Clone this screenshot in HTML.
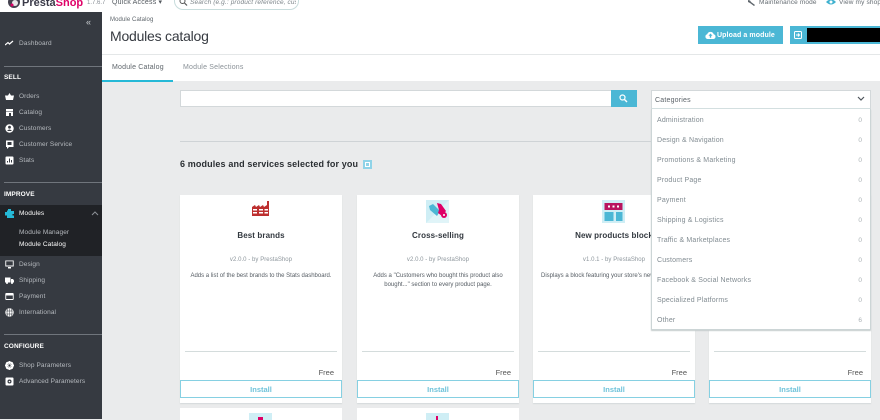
<!DOCTYPE html>
<html><head><meta charset="utf-8"><style>
*{box-sizing:border-box}
html,body{margin:0;padding:0;width:880px;height:419px;overflow:hidden;background:#eaebec;font-family:"Liberation Sans",sans-serif}
.a{position:absolute;white-space:nowrap}
#side{position:absolute;left:0;top:12px;width:102px;height:407px;background:#363a41}
.n{position:absolute;left:19px;margin-top:1px;font-size:6.5px;line-height:10px;color:#b5b9be;letter-spacing:.1px;white-space:nowrap}
.h{position:absolute;left:4px;margin-top:1px;font-size:6.5px;line-height:10px;font-weight:bold;color:#fff;letter-spacing:.1px}
.sep{position:absolute;left:4px;width:98px;height:1px;background:#70757c}
.ic{position:absolute;left:5px;margin-top:1px;width:9px;height:9px}
.card{position:absolute;width:162px;background:#fff;box-shadow:0 1px 1px #d5d8da;top:195px;height:208px;text-align:center}
.card .t{position:absolute;left:0;right:0;top:35px;font-size:8px;line-height:12px;font-weight:bold;color:#32383f;letter-spacing:.1px;white-space:nowrap}
.card .v{position:absolute;left:0;right:0;top:60px;font-size:6px;line-height:10px;color:#8d969c;letter-spacing:.05px}
.card .d{position:absolute;left:10px;right:10px;top:77px;font-size:6px;line-height:8.5px;color:#555c63;white-space:normal}
.card .l{position:absolute;left:5px;right:5px;top:156px;height:1px;background:#d4dcdc}
.card .f{position:absolute;right:8px;top:173px;font-size:7.5px;line-height:10px;color:#555}
.card .b{position:absolute;left:0;right:0;top:185px;height:18px;border:1px solid #86d0e2;font-size:7.5px;line-height:17px;font-weight:bold;color:#6fc3da}
.r2{position:absolute;top:408px;height:12px;width:162px;background:#fff}
.cat{position:absolute;left:5px;margin-top:2px;font-size:7px;line-height:10px;color:#828c92;letter-spacing:.18px;white-space:nowrap}
.z{position:absolute;right:8px;margin-top:2px;font-size:6.5px;line-height:10px;color:#a9b0b4}
</style></head><body>

<!-- top bar -->
<div style="position:absolute;left:0;top:0;width:880px;height:12px;background:#fff"></div>
<svg class="a" style="left:7px;top:0" width="14" height="10"><circle cx="7" cy="2" r="6" fill="#44424f"/><circle cx="8" cy="3" r="3" fill="#e8e6e8"/><circle cx="5" cy="5" r="1.5" fill="#df0067"/></svg>
<div class="a" style="left:22px;top:-3px;font-size:11px;line-height:12px;font-weight:bold;color:#3a3a48">Presta<span style="color:#df0067">Shop</span></div>
<div class="a" style="left:87px;top:-1px;font-size:6px;line-height:9px;color:#8a9097">1.7.6.7</div>
<div class="a" style="left:112px;top:-2px;font-size:7px;line-height:10px;color:#53595f;letter-spacing:.2px">Quick Access ▾</div>
<div style="position:absolute;left:174px;top:-12px;width:125px;height:22px;border:1px solid #c8dcdc;border-radius:9px;background:#fff"></div>
<svg class="a" style="left:179px;top:-2px" width="9" height="9" viewBox="0 0 9 9"><circle cx="3.500" cy="3" r="2.500" fill="none" stroke="#555" stroke-width="1"/><path d="M5.500 5l2.500 2.500" stroke="#555" stroke-width="1.200"/></svg>
<div class="a" style="left:190px;top:-2px;width:106px;overflow:hidden;font-size:6.5px;line-height:10px;font-style:italic;color:#7c8489;letter-spacing:.12px">Search (e.g.: product reference, customer</div>
<svg class="a" style="left:748px;top:0" width="8" height="6" viewBox="0 0 8 6"><path d="M0 0l2 .5 1 1.500 4 3-1 1-4-3-2-1z" fill="#5f666c"/></svg>
<div class="a" style="left:759px;top:-2px;font-size:6.5px;line-height:10px;color:#656c72;letter-spacing:.15px">Maintenance mode</div>
<svg class="a" style="left:826px;top:-1px" width="10" height="8" viewBox="0 0 10 8"><path d="M0 3q5-5 10 0q-5 5-10 0z" fill="#3fb1cf"/><circle cx="5" cy="3" r="1.500" fill="#fff"/></svg>
<div class="a" style="left:839px;top:-2px;font-size:6.5px;line-height:10px;color:#656c72;letter-spacing:.15px">View my shop</div>

<!-- header -->
<div style="position:absolute;left:102px;top:12px;width:778px;height:43px;background:#fff;border-bottom:1px solid #e4e7e8"></div>
<div class="a" style="left:110px;top:15px;font-size:6px;line-height:10px;color:#5d646a;letter-spacing:.1px">Module Catalog</div>
<div class="a" style="left:110px;top:27px;font-size:14px;line-height:18px;color:#363a41;letter-spacing:-.22px">Modules catalog</div>
<div style="position:absolute;left:698px;top:26px;width:85px;height:18px;background:#4bb7d5"></div>
<svg class="a" style="left:705px;top:31px" width="11" height="8" viewBox="0 0 11 8"><path d="M2.500 8a2.400 2.400 0 0 1-.3-4.700 3.400 3.400 0 0 1 6.500 0 2.400 2.400 0 0 1-.2 4.700z" fill="#fff"/><path d="M5.500 2.500l-2 2.200h1.300v2h1.400v-2h1.300z" fill="#4bb7d5"/></svg>
<div class="a" style="left:717px;top:31px;font-size:7px;line-height:10px;font-weight:bold;color:#fff;letter-spacing:.1px">Upload a module</div>
<div style="position:absolute;left:790px;top:26px;width:90px;height:18px;background:#4bb7d5"></div>
<svg class="a" style="left:794px;top:31px" width="9" height="9" viewBox="0 0 9 9"><rect x=".5" y=".5" width="7" height="7" rx="1" fill="none" stroke="#fff"/><path d="M2 4h3M4 2.500l1.500 1.500-1.500 1.500" stroke="#fff" fill="none"/></svg>
<div style="position:absolute;left:807px;top:28px;width:73px;height:14px;background:#000"></div>

<!-- tabs -->
<div style="position:absolute;left:102px;top:55px;width:778px;height:26px;background:#fff"></div>
<div style="position:absolute;left:102px;top:79.500px;width:71px;height:2px;background:#25b9d7"></div>
<div class="a" style="left:112px;top:63px;font-size:7px;line-height:10px;color:#5f666c;letter-spacing:.2px">Module Catalog</div>
<div class="a" style="left:183px;top:63px;font-size:7px;line-height:10px;color:#8a9197;letter-spacing:.2px">Module Selections</div>

<!-- sidebar -->
<div id="side"></div>
<div class="a" style="left:86px;top:17px;font-size:9px;line-height:10px;color:#c8ccd0">«</div>
<svg class="ic" style="top:38px" viewBox="0 0 9 9"><path d="M0 6l3-2.500 1.500 1.500L8 2" fill="none" stroke="#fff" stroke-width="1.200"/></svg>
<div class="n" style="top:38px">Dashboard</div>
<div class="sep" style="top:66px"></div>
<div class="h" style="top:72px">SELL</div>
<svg class="ic" style="top:91px" viewBox="0 0 9 9"><path d="M0 3.500h9l-1 4.500H1zM3 3.500L4.500 1 6 3.500" fill="#fff"/></svg>
<div class="n" style="top:91px">Orders</div>
<svg class="ic" style="top:107px" viewBox="0 0 9 9"><path d="M1 1h7v2H1z M1 3.500h7V8H6V5H4v3H1z" fill="#fff"/></svg>
<div class="n" style="top:107px">Catalog</div>
<svg class="ic" style="top:123px" viewBox="0 0 9 9"><circle cx="4.500" cy="4.500" r="4.200" fill="#fff"/><circle cx="4.500" cy="3.200" r="1.400" fill="#363a41"/><path d="M2 7q2.500-3 5 0" fill="#363a41"/></svg>
<div class="n" style="top:123px">Customers</div>
<svg class="ic" style="top:139px" viewBox="0 0 9 9"><path d="M1 .5h7.500v6.500H4L2 9V7H1z" fill="#fff"/><rect x="2.500" y="2" width="4" height="3" fill="#363a41"/></svg>
<div class="n" style="top:139px">Customer Service</div>
<svg class="ic" style="top:155px" viewBox="0 0 9 9"><rect x=".5" y=".5" width="8" height="8" rx="1" fill="#fff"/><path d="M2.500 6.500V5M4.500 6.500V2.500M6.500 6.500V4" stroke="#363a41"/></svg>
<div class="n" style="top:155px">Stats</div>
<div class="sep" style="top:182px"></div>
<div class="h" style="top:189px">IMPROVE</div>
<div style="position:absolute;left:0;top:205px;width:102px;height:51px;background:#202226"></div>
<svg class="ic" style="top:208px" viewBox="0 0 9 9"><path d="M3 0h3v2h3v3H7.500v1.500H9V9H2V6.500H0V3h2V1.500H3z" fill="#25b9d7"/></svg>
<div class="n" style="top:208px;color:#fff">Modules</div>
<svg class="a" style="left:91px;top:211px" width="8" height="5" viewBox="0 0 8 5"><path d="M1 4l3-3 3 3" fill="none" stroke="#8c9196"/></svg>
<div class="n" style="top:227px">Module Manager</div>
<div class="n" style="top:239px;color:#fff">Module Catalog</div>
<svg class="ic" style="top:259px" viewBox="0 0 9 9"><rect x=".300" y=".500" width="8.400" height="6" fill="#fff"/><rect x="1.200" y="1.300" width="6.600" height="4.200" fill="#363a41"/><rect x="3" y="7" width="3" height="1.500" fill="#fff"/></svg>
<div class="n" style="top:259px">Design</div>
<svg class="ic" style="top:275px" viewBox="0 0 9 9"><path d="M0 1.500h5.500V6.500H0zM6 3h2l1 1.500v2H6z" fill="#fff"/><circle cx="2" cy="7" r="1" fill="#fff"/><circle cx="7" cy="7" r="1" fill="#fff"/></svg>
<div class="n" style="top:275px">Shipping</div>
<svg class="ic" style="top:291px" viewBox="0 0 9 9"><rect x=".300" y="1" width="8.400" height="7" rx="1" fill="#fff"/><rect x="1.200" y="3.500" width="6.600" height="3.500" fill="#363a41"/></svg>
<div class="n" style="top:291px">Payment</div>
<svg class="ic" style="top:307px" viewBox="0 0 9 9"><circle cx="4.500" cy="4.500" r="4.200" fill="#fff"/><path d="M1 3h7M1 6h7M4.500 .500v8M2.500 1q-1 3.500 0 7M6.500 1q1 3.500 0 7" stroke="#363a41" stroke-width=".5" fill="none"/></svg>
<div class="n" style="top:307px">International</div>
<div class="sep" style="top:334px"></div>
<div class="h" style="top:341px">CONFIGURE</div>
<svg class="ic" style="top:360px" viewBox="0 0 9 9"><circle cx="4.500" cy="4.500" r="3.200" fill="none" stroke="#fff" stroke-width="2.200"/><path d="M4.500 0v9M0 4.500h9M1.300 1.300l6.400 6.400M7.700 1.300L1.300 7.700" stroke="#fff" stroke-width=".9"/><circle cx="4.500" cy="4.500" r="1.100" fill="#363a41"/></svg>
<div class="n" style="top:360px">Shop Parameters</div>
<svg class="ic" style="top:376px" viewBox="0 0 9 9"><rect x=".500" y=".500" width="8" height="8" rx="1" fill="#fff"/><circle cx="4.500" cy="4.500" r="2" fill="#363a41"/><circle cx="4.500" cy="4.500" r=".8" fill="#fff"/></svg>
<div class="n" style="top:376px">Advanced Parameters</div>

<!-- search -->
<div style="position:absolute;left:180px;top:90px;width:432px;height:17px;background:#fff;border:1px solid #d3d8da"></div>
<div style="position:absolute;left:611px;top:90px;width:26px;height:17px;background:#4bb7d5"></div>
<svg class="a" style="left:619px;top:94px" width="9" height="9" viewBox="0 0 9 9"><circle cx="3.500" cy="3.500" r="2.500" fill="none" stroke="#fff" stroke-width="1.200"/><path d="M5.500 5.500L8 8" stroke="#fff" stroke-width="1.400"/></svg>
<div style="position:absolute;left:180px;top:141px;width:472px;height:1px;background:#cfd3d6"></div>
<div class="a" style="left:180px;top:158px;font-size:9px;line-height:13px;font-weight:bold;color:#2b2f33;letter-spacing:.13px">6 modules and services selected for you</div>
<svg class="a" style="left:363px;top:160px" width="9" height="9" viewBox="0 0 9 9"><rect width="9" height="9" fill="#8fd3e8"/><rect x="2.500" y="2.500" width="4" height="4" fill="none" stroke="#fff"/></svg>

<!-- cards -->
<div class="card" style="left:180px">
  <svg class="a" style="left:72px;top:6px" width="18" height="16" viewBox="0 0 18 16"><path d="M0 6l3-2 1 2 3-2 1 2 3-2 1 2 3-2V0h2v15H0z" fill="#bd2f2f"/><path d="M1 8h4v1.500H1zM7 8h4v1.500H7zM12.500 8h3.500v1.500h-3.500zM1 11h4v1.500H1zM7 11h4v1.500H7zM12.500 11h3.500v1.500h-3.500z" fill="#fff"/></svg>
  <div class="t">Best brands</div><div class="v">v2.0.0 - by PrestaShop</div>
  <div class="d">Adds a list of the best brands to the Stats dashboard.</div>
  <div class="l"></div><div class="f">Free</div><div class="b">Install</div>
</div>
<div class="card" style="left:357px">
  <svg class="a" style="left:69px;top:5px" width="23" height="23" viewBox="0 0 23 23"><rect width="23" height="23" fill="#cfeef5"/><path d="M23 0L0 23h23z" fill="#e0f4f8"/><path d="M3 6l4-2 7 7-3 5-7-6z" fill="#4bb7d5"/><path d="M11 3l4 1 5 7-4 5-4-3 1-3z" fill="#df0067"/><circle cx="18" cy="15" r="3" fill="#df0067"/><circle cx="18" cy="15" r="1" fill="#fff"/></svg>
  <div class="t">Cross-selling</div><div class="v">v2.0.0 - by PrestaShop</div>
  <div class="d">Adds a "Customers who bought this product also bought..." section to every product page.</div>
  <div class="l"></div><div class="f">Free</div><div class="b">Install</div>
</div>
<div class="card" style="left:533px">
  <svg class="a" style="left:69px;top:5px" width="23" height="23" viewBox="0 0 23 23"><rect width="23" height="23" fill="#cfeef5"/><rect x="2.500" y="3" width="18" height="7" fill="#b9155f"/><path d="M6 5.500h2v2H6zM10.500 5.500h2v2h-2zM15 5.500h2v2h-2z" fill="#fff"/><rect x="2.500" y="12" width="9" height="9" fill="#4bb7d5"/><rect x="14" y="12" width="6.500" height="9" fill="#4bb7d5"/></svg>
  <div class="t">New products block</div><div class="v">v1.0.1 - by PrestaShop</div>
  <div class="d" style="left:8px;white-space:nowrap;text-align:left">Displays a block featuring your store's newest products.</div>
  <div class="l"></div><div class="f">Free</div><div class="b">Install</div>
</div>
<div class="card" style="left:709px">
  <div class="l"></div><div class="f">Free</div><div class="b">Install</div>
</div>
<div class="r2" style="left:180px"><div style="position:absolute;left:69px;top:5px;width:23px;height:7px;background:#cfeef5"></div><div style="position:absolute;left:78px;top:9px;width:5px;height:3px;background:#df0067"></div></div>
<div class="r2" style="left:357px"><div style="position:absolute;left:69px;top:5px;width:23px;height:7px;background:#cfeef5"></div><div style="position:absolute;left:79px;top:8px;width:2px;height:4px;background:#df0067"></div></div>

<!-- categories -->
<div style="position:absolute;left:651px;top:90px;width:220px;height:20px;background:#fff;border:1px solid #d3d8da;border-bottom:2px solid #d3dfe0"></div>
<div class="a" style="left:655px;top:96px;font-size:7px;line-height:10px;color:#5c6369;letter-spacing:.2px">Categories</div>
<svg class="a" style="left:857px;top:96px" width="8" height="6" viewBox="0 0 8 6"><path d="M1 1l3 3 3-3" fill="none" stroke="#4f565c" stroke-width="1.200"/></svg>
<div style="position:absolute;left:651px;top:109px;width:220px;height:221px;background:#fff;border:1px solid #ccd5d6;border-top:0;box-shadow:0 1px 1px #c6cccd">
  <div class="cat" style="top:5px">Administration</div><div class="z" style="top:5px">0</div>
  <div class="cat" style="top:25px">Design &amp; Navigation</div><div class="z" style="top:25px">0</div>
  <div class="cat" style="top:45px">Promotions &amp; Marketing</div><div class="z" style="top:45px">0</div>
  <div class="cat" style="top:65px">Product Page</div><div class="z" style="top:65px">0</div>
  <div class="cat" style="top:85px">Payment</div><div class="z" style="top:85px">0</div>
  <div class="cat" style="top:105px">Shipping &amp; Logistics</div><div class="z" style="top:105px">0</div>
  <div class="cat" style="top:125px">Traffic &amp; Marketplaces</div><div class="z" style="top:125px">0</div>
  <div class="cat" style="top:145px">Customers</div><div class="z" style="top:145px">0</div>
  <div class="cat" style="top:165px">Facebook &amp; Social Networks</div><div class="z" style="top:165px">0</div>
  <div class="cat" style="top:185px">Specialized Platforms</div><div class="z" style="top:185px">0</div>
  <div class="cat" style="top:205px">Other</div><div class="z" style="top:205px">6</div>
</div>
</body></html>
